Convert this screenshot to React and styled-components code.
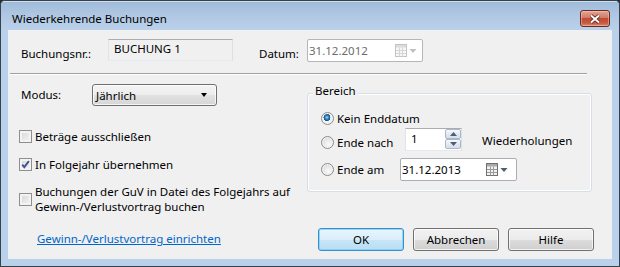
import React from 'react'
import styled, { createGlobalStyle } from 'styled-components'

const GlobalStyle = createGlobalStyle`
  html, body {
    margin: 0;
    padding: 0;
    background: #2b2b2b;
  }
  body {
    font-family: 'Noto Sans', 'Open Sans', sans-serif;
    font-size: 11.5px;
    color: #000;
  }
  * {
    box-sizing: border-box;
  }
`

function CalendarIcon({ disabled }) {
  const line = disabled ? '#d6d6d6' : '#9a9a9a'
  const edge = disabled ? '#c4c4c4' : '#6f6f6f'
  const head = disabled ? '#dcdcdc' : '#a9a9a9'
  const arrow = disabled ? '#c0c0c0' : '#4d5d78'
  return (
    <svg width='22' height='13' viewBox='0 0 22 13'>
      <rect x='0.5' y='0.5' width='11' height='12' fill={disabled ? '#f7f7f7' : '#f2f2f2'} stroke={edge} />
      <rect x='1' y='1' width='10' height='2.5' fill={head} />
      <path d={`M4.5 3.5V12.5M7.5 3.5V12.5M1 6.5H11M1 9.5H11`} stroke={line} strokeWidth='1' />
      <polygon points='14.5,5 21.5,5 18,9' fill={arrow} />
    </svg>
  )
}

function Check({ checked }) {
  return (
    <CheckBox>
      {checked && (
        <svg width='13' height='13' viewBox='0 0 13 13'>
          <path d='M3.2 6.6 L5.3 9.2 L9.9 3.2' fill='none' stroke='#40568c' strokeWidth='1.9' />
        </svg>
      )}
    </CheckBox>
  )
}

function Arrow({ up }) {
  return (
    <svg width='7' height='4' viewBox='0 0 7 4'>
      <polygon points={up ? '0,4 7,4 3.5,0' : '0,0 7,0 3.5,4'} fill='#4d5d78' />
    </svg>
  )
}

function App() {
  return (
    <>
      <GlobalStyle />
      <Window>
        <TitleBar>
          <Title>Wiederkehrende Buchungen</Title>
          <CloseButton>
            <svg width='12' height='10' viewBox='0 0 12 10'>
              <path d='M2 1.5 L10 8.5 M10 1.5 L2 8.5' stroke='#5a1d14' strokeWidth='3.6' />
              <path d='M2 1.5 L10 8.5 M10 1.5 L2 8.5' stroke='#ffffff' strokeWidth='2' />
            </svg>
          </CloseButton>
        </TitleBar>
        <Frame>
          <Client>
            <HeaderRow>
              <FieldLabel $w={87}>Buchungsnr.:</FieldLabel>
              <ReadOnlyBox>BUCHUNG 1</ReadOnlyBox>
              <FieldLabel $w={48} $ml={26}>Datum:</FieldLabel>
              <DateBox $w={116} $disabled>
                <span>31.12.2012</span>
                <CalendarIcon disabled />
              </DateBox>
            </HeaderRow>
            <Separator />
            <MainRow>
              <LeftColumn>
                <ModusRow>
                  <FieldLabel $w={71}>Modus:</FieldLabel>
                  <Combo>
                    <span>Jährlich</span>
                    <Caret />
                  </Combo>
                </ModusRow>
                <CheckRow $mt={23}>
                  <Check />
                  <span>Beträge ausschließen</span>
                </CheckRow>
                <CheckRow $mt={13}>
                  <Check checked />
                  <span>In Folgejahr übernehmen</span>
                </CheckRow>
                <CheckRow $mt={12}>
                  <Check />
                  <span>
                    Buchungen der GuV in Datei des Folgejahrs auf
                    <br />
                    Gewinn-/Verlustvortrag buchen
                  </span>
                </CheckRow>
              </LeftColumn>
              <GroupBox>
                <Legend>Bereich</Legend>
                <RadioList>
                  <RadioRow $h={19}>
                    <RadioOption>
                      <Radio $selected />
                      <OptionText>Kein Enddatum</OptionText>
                    </RadioOption>
                  </RadioRow>
                  <RadioRow $h={23} $align='flex-start'>
                    <RadioOption $mt={7}>
                      <Radio />
                      <OptionText $w={68}>Ende nach</OptionText>
                    </RadioOption>
                    <SpinBox>
                      <SpinValue>1</SpinValue>
                      <SpinButtons>
                        <SpinButton>
                          <Arrow up />
                        </SpinButton>
                        <SpinButton>
                          <Arrow />
                        </SpinButton>
                      </SpinButtons>
                    </SpinBox>
                    <SideText>Wiederholungen</SideText>
                  </RadioRow>
                  <RadioRow $h={23} $mt={7}>
                    <RadioOption>
                      <Radio />
                      <OptionText $w={63}>Ende am</OptionText>
                    </RadioOption>
                    <DateBox $w={117}>
                      <span>31.12.2013</span>
                      <CalendarIcon />
                    </DateBox>
                  </RadioRow>
                </RadioList>
              </GroupBox>
            </MainRow>
            <Footer>
              <Link href='#'>Gewinn-/Verlustvortrag einrichten</Link>
              <ButtonBar>
                <Button $default>OK</Button>
                <Button>Abbrechen</Button>
                <Button>Hilfe</Button>
              </ButtonBar>
            </Footer>
          </Client>
        </Frame>
      </Window>
    </>
  )
}

const Window = styled.div`
  width: 620px;
  height: 267px;
  display: flex;
  flex-direction: column;
  border: 1px solid #36414d;
  border-radius: 5px 5px 0 0;
  background: #b9d1ea;
  overflow: hidden;
`

const TitleBar = styled.div`
  height: 29px;
  flex: none;
  display: flex;
  align-items: center;
  justify-content: space-between;
  padding: 6px 9px 0 11px;
  background: linear-gradient(#9fbad9, #b1c9e4 55%, #b9d1ea);
  box-shadow: inset 0 1px 0 rgba(255, 255, 255, 0.5);
`

const Title = styled.div`
  font-size: 11.5px;
  line-height: 16px;
  color: #000;
`

const CloseButton = styled.div`
  width: 30px;
  height: 17px;
  display: flex;
  align-items: center;
  justify-content: center;
  border: 1px solid #6b2a20;
  border-radius: 3px;
  background: linear-gradient(#e2a597, #d07b67 45%, #c04a33 50%, #c65a3f 80%, #d98a6e);
  box-shadow: inset 0 0 0 1px rgba(255, 210, 200, 0.45);
`

const Frame = styled.div`
  flex: 1;
  display: flex;
  padding: 0 7px 7px 7px;
`

const Client = styled.div`
  flex: 1;
  display: flex;
  flex-direction: column;
  padding: 9px 18px 8px 13px;
  background: #f0f0f0;
`

const HeaderRow = styled.div`
  display: flex;
  align-items: flex-end;
  height: 23px;
`

const FieldLabel = styled.div`
  flex: none;
  width: ${({ $w }) => $w}px;
  margin-left: ${({ $ml }) => $ml || 0}px;
  line-height: 16px;
  white-space: nowrap;
`

const ReadOnlyBox = styled.div`
  align-self: flex-start;
  width: 125px;
  height: 22px;
  padding: 1px 5px;
  line-height: 15px;
  background: #f0f0f0;
  border: 1px solid;
  border-color: #abadb3 #dbdfe6 #e3e9ef #e2e3ea;
`

const DateBox = styled.div`
  flex: none;
  width: ${({ $w }) => $w}px;
  height: 23px;
  display: flex;
  align-items: center;
  justify-content: space-between;
  padding: 0 ${({ $disabled }) => ($disabled ? 5 : 8)}px 0 1px;
  background: #fff;
  border: 1px solid ${({ $disabled }) => ($disabled ? '#b3b7bb' : '#abadb3')};
  border-radius: 2px;
  color: ${({ $disabled }) => ($disabled ? '#6d6d6d' : '#000')};
  line-height: 15px;
  svg {
    display: block;
  }
`

const Separator = styled.div`
  height: 2px;
  margin: 11px 7px 0 -11px;
  border-top: 1px solid #a0a0a0;
  border-bottom: 1px solid #ffffff;
`

const MainRow = styled.div`
  display: grid;
  grid-template-columns: 286px 285px;
  align-items: start;
  margin-top: 9px;
`

const LeftColumn = styled.div`
  display: flex;
  flex-direction: column;
`

const ModusRow = styled.div`
  display: flex;
  align-items: center;
  height: 22px;
`

const Combo = styled.div`
  width: 125px;
  height: 22px;
  display: flex;
  align-items: center;
  justify-content: space-between;
  padding: 0 9px 0 3px;
  border: 1px solid #707070;
  border-radius: 3px;
  background: linear-gradient(#f4f4f4, #ededed 50%, #e2e2e2 50%, #d6d6d6);
  box-shadow: inset 0 0 0 1px rgba(255, 255, 255, 0.75);
  line-height: 15px;
`

const Caret = styled.span`
  width: 0;
  height: 0;
  border-left: 3.5px solid transparent;
  border-right: 3.5px solid transparent;
  border-top: 4px solid #000;
`

const CheckRow = styled.div`
  display: flex;
  align-items: center;
  gap: 3px;
  margin-top: ${({ $mt }) => $mt}px;
  line-height: 15px;
`

const CheckBox = styled.span`
  flex: none;
  width: 13px;
  height: 13px;
  margin-left: -2px;
  border: 1px solid #8e8f8f;
  background: linear-gradient(135deg, #d3d5d8, #f6f6f6);
  box-shadow: inset 0 0 0 2px #f3f3f3;
  position: relative;
  svg {
    position: absolute;
    left: -1px;
    top: -1px;
  }
`

const GroupBox = styled.fieldset`
  margin: 0;
  min-width: 0;
  padding: 0 0 10px 5px;
  border: 1px solid #d5dfe5;
  border-radius: 3px;
  box-shadow: inset 0 0 0 1px #ffffff;
`

const Legend = styled.legend`
  padding: 0 2px 4px;
  line-height: 14px;
  background: #f0f0f0;
`

const RadioList = styled.div`
  display: flex;
  flex-direction: column;
  padding: 7px 0 0 8px;
`

const RadioRow = styled.div`
  display: flex;
  align-items: ${({ $align }) => $align || 'center'};
  height: ${({ $h }) => $h}px;
  margin-top: ${({ $mt }) => $mt || 0}px;
`

const RadioOption = styled.div`
  flex: none;
  display: flex;
  align-items: center;
  gap: 3px;
  margin-top: ${({ $mt }) => $mt || 0}px;
  line-height: 15px;
`

const OptionText = styled.span`
  width: ${({ $w }) => ($w ? `${$w}px` : 'auto')};
  white-space: nowrap;
`

const Radio = styled.span`
  flex: none;
  width: 13px;
  height: 13px;
  border-radius: 50%;
  border: 1px solid #8a8c8e;
  background: ${({ $selected }) =>
    $selected
      ? 'radial-gradient(circle at 45% 40%, #a9e0fa 0, #3a8fcf 1.5px, #134f86 3.4px, #f4f4f4 3.6px, #e6e6e6 100%)'
      : 'radial-gradient(circle at 60% 65%, #fbfbfb 0, #eaeaea 40%, #cfd1d4 100%)'};
  box-shadow: inset 0 0 0 1px #f4f4f4;
`

const SpinBox = styled.div`
  flex: none;
  width: 57px;
  height: 23px;
  display: flex;
  justify-content: space-between;
  padding-left: 5px;
  background: #fff;
  border: 1px solid;
  border-color: #abadb3 #dbdfe6 #e3e9ef #e2e3ea;
  line-height: 15px;
`

const SpinValue = styled.span`
  padding-top: 2px;
`

const SpinButtons = styled.div`
  display: flex;
  flex-direction: column;
  width: 16px;
`

const SpinButton = styled.div`
  height: 10px;
  display: flex;
  align-items: center;
  justify-content: center;
  border: 1px solid #a9b7c9;
  border-radius: 2px;
  background: linear-gradient(#f7f9fc, #e3e9f1 50%, #d6dfea);
  svg {
    display: block;
  }
`

const SideText = styled.div`
  margin: 5px 0 0 20px;
  line-height: 15px;
  white-space: nowrap;
`

const Footer = styled.div`
  margin-top: auto;
  display: flex;
  align-items: center;
  justify-content: space-between;
`

const Link = styled.a`
  margin: 0 0 2px 16px;
  color: #0066cc;
  text-decoration: underline;
  line-height: 15px;
`

const ButtonBar = styled.div`
  display: flex;
  gap: 9px;
`

const Button = styled.button`
  width: 86px;
  height: 23px;
  padding: 0;
  font-family: inherit;
  font-size: 11.5px;
  color: #000;
  border-radius: 3px;
  border: 1px solid ${({ $default }) => ($default ? '#3c8dc9' : '#707070')};
  background: ${({ $default }) =>
    $default
      ? 'linear-gradient(#e9f5fc, #d9eefa 50%, #c8e6f7 50%, #b8ddf3)'
      : 'linear-gradient(#f2f2f2, #ebebeb 50%, #dddddd 50%, #cfcfcf)'};
  box-shadow: inset 0 0 0 1px
    ${({ $default }) => ($default ? 'rgba(120, 210, 250, 0.8)' : 'rgba(255, 255, 255, 0.7)')};
`

export default App
